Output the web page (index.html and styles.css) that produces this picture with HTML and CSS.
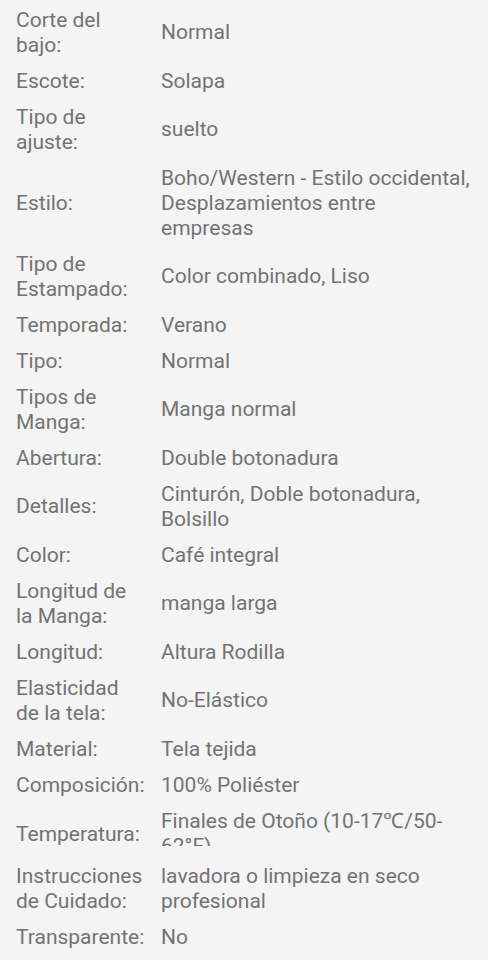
FILE: index.html
```html
<!DOCTYPE html>
<html lang="es">
<head>
  <meta charset="UTF-8">
  <meta name="viewport" content="width=device-width, initial-scale=1.0">
  <title>Descripción</title>
  <link rel="stylesheet" href="styles.css">
</head>
<body>
  <dl class="attrs">
    <div class="row"><dt class="label">Corte del bajo:</dt><dd class="value">Normal</dd></div>
    <div class="row"><dt class="label">Escote:</dt><dd class="value">Solapa</dd></div>
    <div class="row"><dt class="label">Tipo de ajuste:</dt><dd class="value">suelto</dd></div>
    <div class="row"><dt class="label">Estilo:</dt><dd class="value">Boho/Western - Estilo occidental, Desplazamientos entre empresas</dd></div>
    <div class="row"><dt class="label">Tipo de Estampado:</dt><dd class="value">Color combinado, Liso</dd></div>
    <div class="row"><dt class="label">Temporada:</dt><dd class="value">Verano</dd></div>
    <div class="row"><dt class="label">Tipo:</dt><dd class="value">Normal</dd></div>
    <div class="row"><dt class="label">Tipos de Manga:</dt><dd class="value">Manga normal</dd></div>
    <div class="row"><dt class="label">Abertura:</dt><dd class="value">Double botonadura</dd></div>
    <div class="row"><dt class="label">Detalles:</dt><dd class="value">Cinturón, Doble botonadura, Bolsillo</dd></div>
    <div class="row"><dt class="label">Color:</dt><dd class="value">Café integral</dd></div>
    <div class="row"><dt class="label">Longitud de la Manga:</dt><dd class="value">manga larga</dd></div>
    <div class="row"><dt class="label">Longitud:</dt><dd class="value">Altura Rodilla</dd></div>
    <div class="row"><dt class="label">Elasticidad de la tela:</dt><dd class="value">No-Elástico</dd></div>
    <div class="row"><dt class="label">Material:</dt><dd class="value">Tela tejida</dd></div>
    <div class="row"><dt class="label">Composición:</dt><dd class="value">100% Poliéster</dd></div>
    <div class="row row--clip"><dt class="label">Temperatura:</dt><dd class="value">Finales de Otoño (10-17℃/50-62°F)</dd></div>
    <div class="row"><dt class="label">Instrucciones de Cuidado:</dt><dd class="value">lavadora o limpieza en seco profesional</dd></div>
    <div class="row"><dt class="label">Transparente:</dt><dd class="value">No</dd></div>
  </dl>
</body>
</html>
```

FILE: styles.css
```css
body {
  margin: 0;
  background-color: #f4f4f4;
  font-family: Roboto, "Liberation Sans", Arial, sans-serif;
  color: #737373;
  font-size: 21px;
  line-height: 25px;
}
.attrs {
  margin: 0;
  padding: 2px 18px 0 16px;
}
.row {
  display: flex;
  align-items: center;
  padding: 5.5px 0;
}
.label {
  flex: 0 0 129px;
  margin-right: 16px;
}
.value {
  flex: 1;
  margin: 0;
}
.row--clip {
  height: 55px;
  box-sizing: border-box;
}
.row--clip .label {
  padding-top: 7px;
}
.row--clip .value {
  align-self: flex-start;
  max-height: 37.5px;
  overflow: hidden;
}
```
